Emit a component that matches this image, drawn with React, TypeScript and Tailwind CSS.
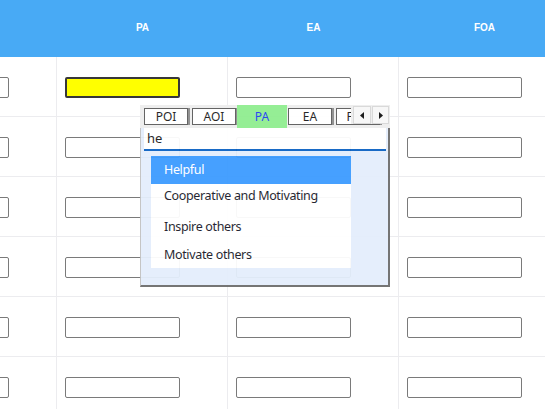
import { useState } from "react"

const columns = ["", "PA", "EA", "FOA"]
const rows = [0, 1, 2, 3, 4, 5]
const suggestions = ["Helpful", "Cooperative and Motivating", "Inspire others", "Motivate others"]
// the list rows in the picture are not evenly spaced
const itemPad = ["", "pb-[4px]", "pt-[2px]", "pt-[2px]"]

function Cell({ highlight }: { highlight?: boolean }) {
  return (
    <div className="h-[60px] border-r border-b border-[#ececef] pl-[8px] pt-[20px]">
      <div
        className={
          highlight
            ? "h-[21px] w-[115px] rounded-[2px] border-2 border-[#383838] bg-[#ffff00]"
            : "h-[21px] w-[115px] rounded-[2px] border border-[#7a7a7a] bg-white"
        }
      />
    </div>
  )
}

function Tab({ label, active, className }: { label: string; active?: boolean; className: string }) {
  if (active) {
    return (
      <div className={`flex h-[23px] items-center justify-center bg-[#90ee90] text-[12px] text-[#1f3ff0] ${className}`}>
        {label}
      </div>
    )
  }
  return (
    <div
      className={`mt-[3px] flex h-[17px] shrink-0 items-center justify-center border border-[#5c5c5c] bg-white text-[12px] text-[#1c1c1c] shadow-[2px_0_0_#8d8d8d] ${className}`}
    >
      {label}
    </div>
  )
}

function Suggest() {
  const [selected] = useState(0)
  return (
    <div className="absolute left-[140px] top-[105px] w-[250px] opacity-95 font-['Noto_Sans',sans-serif]">
      <div className="relative flex h-[23px] overflow-hidden bg-[#eeeeee] pl-[4px]">
        <Tab label="POI" className="w-[44px]" />
        <Tab label="AOI" className="ml-[4px] w-[44px]" />
        <Tab label="PA" active className="ml-[1px] w-[50px] shrink-0" />
        <Tab label="EA" className="ml-[1px] w-[44px]" />
        <Tab label="FOA" className="ml-[4px] w-[44px]" />
        <div className="absolute right-[1px] top-[1px] flex gap-[1px] bg-[#eeeeee] pl-[2px]">
          <button className="flex h-[18px] w-[18px] items-center justify-center border border-[#d8d8d8] bg-[#f7f7f7]">
            <svg width="5" height="7" viewBox="0 0 5 7">
              <path d="M4 0 L0 3.5 L4 7 Z" fill="#111" />
            </svg>
          </button>
          <button className="flex h-[18px] w-[17px] items-center justify-center border border-[#d8d8d8] bg-[#f7f7f7]">
            <svg width="5" height="7" viewBox="0 0 5 7">
              <path d="M1 0 L5 3.5 L1 7 Z" fill="#111" />
            </svg>
          </button>
        </div>
      </div>
      <div className="h-[159px] border-l border-r-2 border-b-2 border-l-[#c2c2c2] border-r-[#6e6e6e] border-b-[#6e6e6e] bg-[#e4eefc]">
        <div className="ml-[3px] flex h-[23px] w-[242px] items-center border-b-2 border-[#0c63c4] bg-white pl-[3px] text-[13px] text-[#1a1a1a]">
          he
        </div>
        <ul className="ml-[10px] mt-[5px] w-[200px] bg-white text-[12.5px] tracking-[-0.35px]">
          {suggestions.map((s, i) => (
            <li
              key={s}
              className={
                i === selected
                  ? `flex h-[28px] items-center bg-[#3d9bff] pl-[13px] text-white ${itemPad[i]}`
                  : `flex h-[28px] items-center pl-[13px] text-[#1a1a2a] ${itemPad[i]}`
              }
            >
              {s}
            </li>
          ))}
        </ul>
      </div>
    </div>
  )
}

export default function App() {
  return (
    <div className="relative h-[409px] w-[545px] overflow-hidden bg-white">
      <div className="-ml-[114px] w-[684px]">
        <div className="grid h-[57px] grid-cols-[171px_171px_171px_171px] bg-[#48aaf5] font-['Liberation_Sans',sans-serif] text-[10px] font-bold text-white">
          {columns.map((c, i) => (
            <div key={i} className="flex items-center justify-center pb-[3px]">
              {c}
            </div>
          ))}
        </div>
        {rows.map((r) => (
          <div key={r} className="grid grid-cols-[171px_171px_171px_171px]">
            {columns.map((c, ci) => (
              <Cell key={ci} highlight={r === 0 && ci === 1} />
            ))}
          </div>
        ))}
      </div>
      <Suggest />
    </div>
  )
}
